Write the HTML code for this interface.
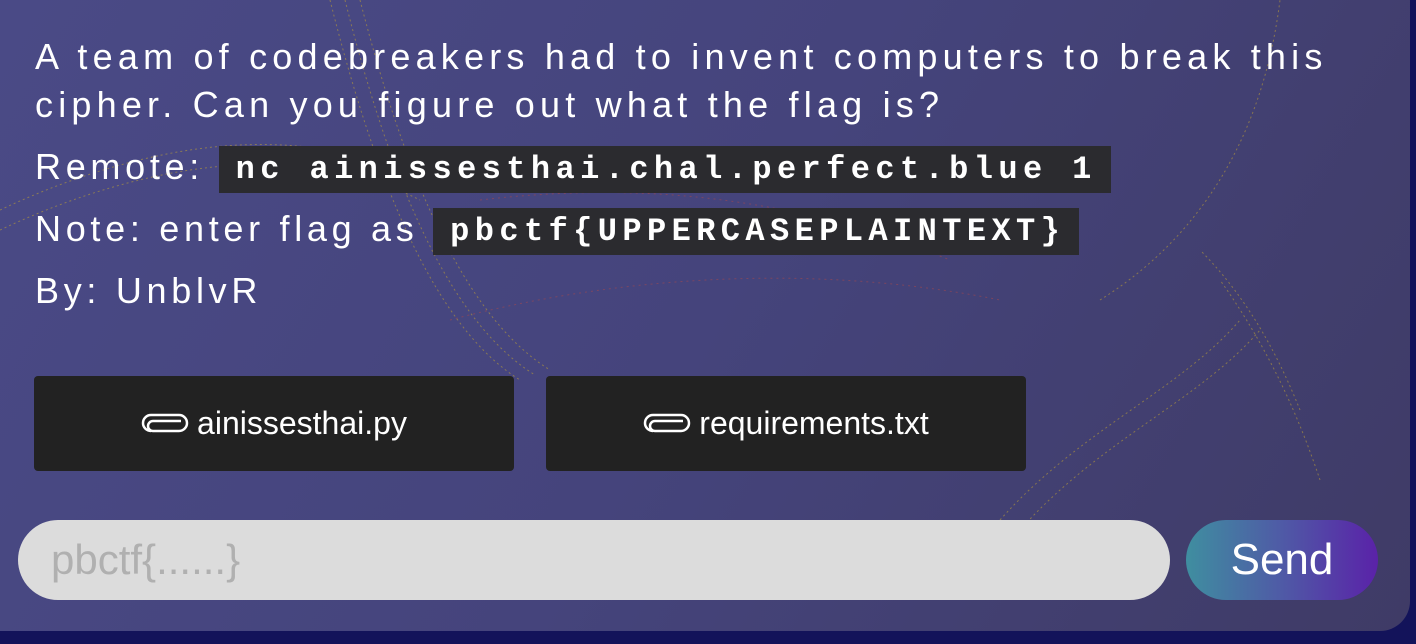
<!DOCTYPE html>
<html><head><style>
html,body{margin:0;padding:0;width:1416px;height:644px;overflow:hidden;background:#13135a;}
.panel{position:absolute;left:0;top:0;width:1410px;height:631px;border-radius:0 0 30px 0;
background:linear-gradient(120deg,#4a4a86 0%,#45447c 50%,#3f3b66 100%);overflow:hidden;}
.t{position:absolute;left:35px;color:#fff;font-family:"Liberation Sans",sans-serif;font-size:36px;letter-spacing:4.7px;white-space:nowrap;}
.code{display:inline-block;background:#2b2b2f;font-family:"Liberation Mono",monospace;font-weight:bold;font-size:32px;letter-spacing:5.4px;padding:0 14px 0 17px;line-height:47px;vertical-align:middle;}
.btn{position:absolute;top:376px;width:480px;height:95px;background:#222;border-radius:4px;color:#fff;font-family:"Liberation Sans",sans-serif;font-size:32px;display:flex;align-items:center;justify-content:center;}
.btn svg{margin-right:8px}
.inp{position:absolute;left:18px;top:520px;width:1152px;height:80px;border-radius:40px;background:#dcdcdc;color:#b0b0b0;font-family:"Liberation Sans",sans-serif;font-size:42px;line-height:80px;padding-left:33px;box-sizing:border-box;}
.send{position:absolute;left:1186px;top:520px;width:192px;height:80px;border-radius:40px;background:linear-gradient(90deg,#3f8ea0,#4f5aa6 50%,#5a22a8);color:#fff;font-family:"Liberation Sans",sans-serif;font-size:44px;line-height:80px;text-align:center;}
</style></head><body>
<div class="panel">
<svg width="1410" height="631" style="position:absolute;left:0;top:0" fill="none">
<g stroke="#b59a3a" stroke-width="1" stroke-dasharray="2 3" opacity="0.6">
<path d="M330 0 C380 200 440 330 520 380"/><path d="M345 0 C395 200 455 325 535 375"/><path d="M360 0 C410 195 470 320 550 370"/>
<path d="M0 210 C150 140 300 120 420 180"/><path d="M0 230 C150 160 300 140 420 200"/>
<path d="M1020 530 C1100 440 1200 400 1260 330"/><path d="M1000 520 C1080 430 1180 390 1240 320"/>
<path d="M1300 410 C1280 360 1250 300 1200 250"/><path d="M1320 480 C1300 420 1270 350 1220 280"/>
<path d="M1100 300 C1180 250 1260 160 1280 0"/>
</g>
<g stroke="#b04848" stroke-width="1" stroke-dasharray="2 4" opacity="0.5">
<path d="M450 320 C600 280 800 260 1000 300"/><path d="M480 200 C650 180 800 200 950 260"/>
</g>
</svg>
<div class="t" style="top:36px;letter-spacing:5.2px">A team of codebreakers had to invent computers to break this</div>
<div class="t" style="top:84px;letter-spacing:5.2px">cipher. Can you figure out what the flag is?</div>
<div class="t" style="top:143px;line-height:47px">Remote: <span class="code">nc ainissesthai.chal.perfect.blue 1</span></div>
<div class="t" style="top:205px;line-height:47px">Note: enter flag as <span class="code">pbctf{UPPERCASEPLAINTEXT}</span></div>
<div class="t" style="top:270px">By: UnblvR</div>
<div class="btn" style="left:34px"><svg width="48" height="22" viewBox="0 0 48 22"><path d="M40 8 H12 a5 5 0 0 0 0 10 H38 a8 8 0 0 0 0-16 H10 a8 8 0 0 0 0 16" stroke="#fff" stroke-width="2.5" fill="none"/></svg>ainissesthai.py</div>
<div class="btn" style="left:546px"><svg width="48" height="22" viewBox="0 0 48 22"><path d="M40 8 H12 a5 5 0 0 0 0 10 H38 a8 8 0 0 0 0-16 H10 a8 8 0 0 0 0 16" stroke="#fff" stroke-width="2.5" fill="none"/></svg>requirements.txt</div>
<div class="inp">pbctf{......}</div>
<div class="send">Send</div>
</div>
</body></html>
